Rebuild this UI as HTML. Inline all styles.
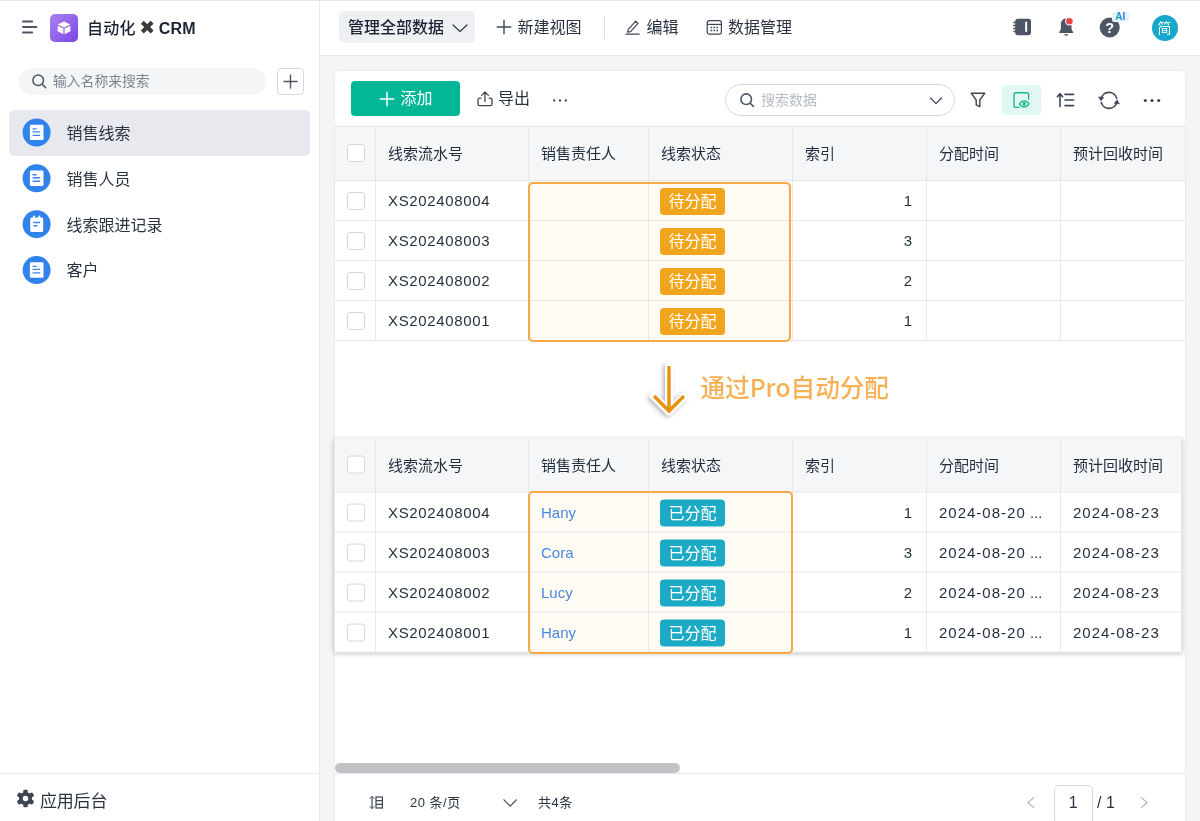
<!DOCTYPE html>
<html lang="zh-CN">
<head>
<meta charset="utf-8">
<title>自动化 CRM</title>
<style>
*{box-sizing:border-box;margin:0;padding:0}
html,body{width:1200px;height:821px;overflow:hidden}
body{font-family:"Liberation Sans","Noto Sans CJK SC",sans-serif;color:#1f2d3d;background:#f4f5f7;position:relative;font-size:14px}
.abs{position:absolute}
#topline{left:0;top:0;width:1200px;height:1px;background:#e3e5e8}
#side{left:0;top:0;width:320px;height:821px;background:#fff;border-right:1px solid #e6e8eb}
#top{left:320px;top:0;width:880px;height:56px;background:#fff;border-bottom:1px solid #e9ebee}
.t{position:absolute;white-space:nowrap;line-height:20px}
#card{left:335px;top:71px;width:850px;height:751px;background:#fff;border-radius:4px 4px 0 0;box-shadow:0 0 0 1px #eceef1}
table{border-collapse:collapse;table-layout:fixed;position:absolute;left:334px;background:#fff}
td,th{border:1px solid #e6e8eb;height:40px;font-weight:normal;text-align:left;padding:0 0 0 12px;font-size:15px;color:#1f2d3d;white-space:nowrap;overflow:hidden}
th{height:54px;padding-bottom:2px;background:#f5f6f8;color:#1f2d3d}
td.n{text-align:right;padding-right:14px}
td.id{letter-spacing:0.65px}
.dt{letter-spacing:1px}
td.hl{background:#fefaf4;border-top-color:#e9e5df;border-bottom-color:#e9e5df}
.cb{display:block;width:18px;height:18px;border:1px solid #d5d8dd;border-radius:3px;background:#fff;margin-left:0}
.tag{display:inline-block;height:27px;line-height:27px;padding:0 8.5px;border-radius:4px;color:#fff;font-size:16px;vertical-align:middle;margin-left:-1px;position:relative;top:1px}
.tag.o{background:#f0a51c}
.tag.b{background:#1daac6}
a.lk{color:#4a8ad8;text-decoration:none}
.hlbox{border:2px solid #f6a945;border-radius:5px}
</style>
</head>
<body>
<div id="wrap" style="position:absolute;left:0;top:0;width:1200px;height:821px;will-change:transform">
<div id="topline" class="abs" style="z-index:9"></div>
<div id="side" class="abs">
<svg class="abs" style="left:20px;top:17px" width="20" height="20" viewBox="0 0 20 20" fill="none" stroke="#4d5564" stroke-width="2" stroke-linecap="round"><path d="M3 4.4H12.2M3 10H16.4M3 15.6H12.2"/></svg>
<div class="abs" style="left:50px;top:14px;width:28px;height:28px;border-radius:5px;background:linear-gradient(135deg,#a985f2 0%,#7a43e6 100%)">
<svg class="abs" style="left:7px;top:6.800px" width="14" height="13.800" viewBox="0 0 14 15" preserveAspectRatio="none"><path d="M7 0.6L13.2 3.9L7 7.2L0.8 3.9Z" fill="#fff"/><path d="M0.6 5.1L6.4 8.2V14.4L0.6 11.2Z" fill="#fff"/><path d="M13.4 5.1L7.6 8.2V14.4L13.4 11.2Z" fill="#fff"/></svg></div>
<div class="t" style="left:87px;top:16.5px;font-size:16px;font-weight:500;color:#1c2433;letter-spacing:0.2px">自动化 <span style="font-family:'DejaVu Sans',sans-serif;font-size:19px;color:#3a3a3a;line-height:20px;letter-spacing:-1px;margin:0 0 0 -1px">✖</span> <b>CRM</b></div>
<div class="abs" style="left:19px;top:68px;width:247px;height:27px;border-radius:14px;background:#f4f5f7"></div>
<svg class="abs" style="left:31px;top:73px" width="16" height="16" viewBox="0 0 16 16" fill="none" stroke="#4d5564" stroke-width="1.5" stroke-linecap="round"><circle cx="7.2" cy="7.2" r="5.3"/><path d="M11.2 11.2L14.6 14.6"/></svg>
<div class="t" style="left:53px;top:72px;font-size:13.800px;color:#7d8490">输入名称来搜索</div>
<div class="abs" style="left:277px;top:68px;width:27px;height:27px;border:1px solid #d6d9de;border-radius:4px;background:#fff"></div>
<svg class="abs" style="left:282px;top:73px" width="17" height="17" viewBox="0 0 17 17" fill="none" stroke="#4d5564" stroke-width="1.4" stroke-linecap="round"><path d="M8.5 2V15M2 8.5H15"/></svg>
<div class="abs" style="left:9px;top:110px;width:301px;height:46px;border-radius:5px;background:#e8e9ee"></div>
<svg class="abs" style="left:22px;top:118px" width="30" height="30" viewBox="0 0 30 30"><g transform="translate(0.600,0.50)"><circle cx="14" cy="14" r="14" fill="#3183ec"/><rect x="7.300" y="6.200" width="13.600" height="15.400" rx="1.200" fill="#fff"/><path d="M10 10.400h4M10 13.400h7.600M10 16.900h7.600" stroke="#3a86ee" stroke-width="1.300" fill="none"/></g></svg>
<div class="t" style="left:66.500px;top:124px;font-size:16px;color:#2b3342">销售线索</div>
<svg class="abs" style="left:22px;top:164px" width="30" height="30" viewBox="0 0 30 30"><g transform="translate(0.600,0.35)"><circle cx="14" cy="14" r="14" fill="#3183ec"/><rect x="7.300" y="6.200" width="13.600" height="15.400" rx="1.200" fill="#fff"/><path d="M10 10.400h4M10 13.400h7.600M10 16.900h7.600" stroke="#3a86ee" stroke-width="1.300" fill="none"/></g></svg>
<div class="t" style="left:66.500px;top:170px;font-size:16px;color:#2b3342">销售人员</div>
<svg class="abs" style="left:22px;top:210px" width="30" height="30" viewBox="0 0 30 30"><g transform="translate(0.600,0.20)"><circle cx="14" cy="14" r="14" fill="#3183ec"/><rect x="7.600" y="7.200" width="13" height="14.600" rx="1.600" fill="#fff"/><rect x="10.600" y="5.200" width="1.700" height="3.600" rx="0.800" fill="#fff"/><rect x="15.900" y="5.200" width="1.700" height="3.600" rx="0.800" fill="#fff"/><path d="M10.800 12.300h6.600M10.800 15.600h4" stroke="#3a86ee" stroke-width="1.400" fill="none"/></g></svg>
<div class="t" style="left:66.500px;top:216px;font-size:16px;color:#2b3342">线索跟进记录</div>
<svg class="abs" style="left:22px;top:256px" width="30" height="30" viewBox="0 0 30 30"><g transform="translate(0.600,0.05)"><circle cx="14" cy="14" r="14" fill="#3183ec"/><rect x="7.300" y="6.200" width="13.600" height="15.400" rx="1.200" fill="#fff"/><path d="M10 10.400h4M10 13.400h7.600M10 16.900h7.600" stroke="#3a86ee" stroke-width="1.300" fill="none"/></g></svg>
<div class="t" style="left:66.500px;top:261px;font-size:16px;color:#2b3342">客户</div>
<div class="abs" style="left:0;top:773px;width:319px;height:1px;background:#e9ebee"></div>
<svg class="abs" style="left:16.200px;top:789.200px" width="19" height="19" viewBox="-10 -10 20 20"><g fill="#3d4554"><rect x="-2.300" y="-9.300" width="4.600" height="5" rx="0.800" transform="rotate(0)"/><rect x="-2.300" y="-9.300" width="4.600" height="5" rx="0.800" transform="rotate(60)"/><rect x="-2.300" y="-9.300" width="4.600" height="5" rx="0.800" transform="rotate(120)"/><rect x="-2.300" y="-9.300" width="4.600" height="5" rx="0.800" transform="rotate(180)"/><rect x="-2.300" y="-9.300" width="4.600" height="5" rx="0.800" transform="rotate(240)"/><rect x="-2.300" y="-9.300" width="4.600" height="5" rx="0.800" transform="rotate(300)"/><circle r="6.900"/></g><circle r="2.900" fill="#fff"/></svg>
<div class="t" style="left:40px;top:791.5px;font-size:17px;color:#2b3342;letter-spacing:-0.2px">应用后台</div>
</div>
<div id="top" class="abs">
<div class="abs" style="left:19px;top:11px;width:136px;height:32px;border-radius:5px;background:#eff0f4"></div>
<div class="t" style="left:28px;top:18px;font-size:16px;font-weight:500;color:#1c2433">管理全部数据</div>
<svg class="abs" style="left:131px;top:20px" width="18" height="16" viewBox="0 0 18 16" fill="none" stroke="#3d4554" stroke-width="1.4" stroke-linecap="round" stroke-linejoin="round"><path d="M2 5L9 11.6L16 5"/></svg>
<svg class="abs" style="left:176px;top:19px" width="16" height="16" viewBox="0 0 16 16" fill="none" stroke="#3d4554" stroke-width="1.4" stroke-linecap="round"><path d="M8 1.2V14.8M1.2 8H14.8"/></svg>
<div class="t" style="left:197.5px;top:18px;font-size:16px;color:#2b3342">新建视图</div>
<div class="abs" style="left:284px;top:16px;width:1px;height:23px;background:#dcdfe3"></div>
<svg class="abs" style="left:304px;top:18px" width="18" height="18" viewBox="0 0 18 18" fill="none" stroke="#3d4554" stroke-width="1.2" stroke-linecap="round" stroke-linejoin="round"><path d="M4.2 11.6L11.6 3.2L14 5.4L6.6 13.6L3.6 14.2Z"/><path d="M2 16.2H15.2"/></svg>
<div class="t" style="left:326.5px;top:18px;font-size:16px;color:#2b3342">编辑</div>
<svg class="abs" style="left:386px;top:19px" width="17" height="17" viewBox="0 0 17 17" fill="none" stroke="#3d4554" stroke-width="1.2"><rect x="1.2" y="1.6" width="14.2" height="13.6" rx="2.2"/><path d="M1.2 5.4H15.4"/><path d="M4.6 8.4h1.6M7.5 8.4h1.6M10.4 8.4h1.6M4.6 11.4h1.6M7.5 11.4h1.6M10.4 11.4h1.6" stroke-width="1.5"/></svg>
<div class="t" style="left:408px;top:18px;font-size:16px;color:#2b3342">数据管理</div>
<!-- right icons -->
<svg class="abs" style="left:692px;top:17px" width="20" height="20" viewBox="0 0 20 20"><rect x="3.2" y="1.8" width="15.8" height="16.4" rx="2.6" fill="#4e5665"/><rect x="13.2" y="4.8" width="1.9" height="10" fill="#fff"/><path d="M1.8 5.4h2.4M1.8 8.4h2.4M1.8 11.4h2.4M1.8 14.4h2.4" stroke="#4e5665" stroke-width="1.5" stroke-linecap="round"/></svg>
<svg class="abs" style="left:737px;top:16px" width="20" height="22" viewBox="0 0 20 22"><path d="M9.2 2.4c-3.4 0-5.3 2.6-5.3 5.6v4.6c0 1.2-.6 2.2-1.6 3.2-.5.5-.2 1.2.5 1.2h12.8c.7 0 1-.7.5-1.2-1-1-1.6-2-1.6-3.2V8c0-3-1.9-5.600-5.300-5.600z" fill="#4e5665"/><path d="M7 18.200a2.300 2.300 0 0 0 4.400 0z" fill="#4e5665"/><circle cx="12.400" cy="5.200" r="4.300" fill="#fff"/><circle cx="12.400" cy="5.200" r="3.300" fill="#ee4545"/></svg>
<svg class="abs" style="left:779px;top:17px" width="22" height="22" viewBox="0 0 22 22"><circle cx="10.700" cy="10.500" r="10" fill="#4e5665"/><text x="10.700" y="15.600" font-family="Liberation Sans,sans-serif" font-weight="bold" font-size="14.500" fill="#fff" text-anchor="middle">?</text></svg>
<div class="abs" style="left:792px;top:11.500px;width:16.500px;height:10px;border-radius:2px;background:#e3f4fb"></div>
<svg class="abs" style="left:792px;top:11px" width="17" height="11" viewBox="0 0 17 11"><defs><linearGradient id="aig" x1="0" y1="0" x2="1" y2="0"><stop offset="0" stop-color="#27b98c"/><stop offset="0.600" stop-color="#2b7de9"/><stop offset="1" stop-color="#4a6cf0"/></linearGradient></defs><text x="8.300" y="9.200" font-family="Liberation Sans,sans-serif" font-weight="bold" font-size="10" fill="url(#aig)" text-anchor="middle">AI</text></svg>
<div class="abs" style="left:831.500px;top:14.500px;width:26px;height:26px;border-radius:13px;background:#17a7ca"></div>
<div class="t" style="left:837.500px;top:18px;font-size:14px;color:#fff">简</div>
</div>
<div id="card" class="abs"></div>
<!-- toolbar -->
<div class="abs" style="left:351px;top:81px;width:109px;height:35px;border-radius:4px;background:#03b796"></div>
<svg class="abs" style="left:379px;top:91px" width="16" height="16" viewBox="0 0 16 16" fill="none" stroke="#fff" stroke-width="1.500" stroke-linecap="round"><path d="M8 1.200V14.800M1.200 8H14.800"/></svg>
<div class="t" style="left:400.500px;top:89px;font-size:16px;color:#fff">添加</div>
<svg class="abs" style="left:476px;top:90px" width="18" height="18" viewBox="0 0 18 18" fill="none" stroke="#3d4554" stroke-width="1.300" stroke-linecap="round" stroke-linejoin="round"><path d="M9 11.500V2.200M5.600 5.400L9 2L12.400 5.400"/><path d="M4.800 8.200H3.600C2.700 8.200 2 8.900 2 9.800V14C2 14.900 2.700 15.600 3.600 15.600H14.400C15.300 15.600 16 14.900 16 14V9.800C16 8.900 15.300 8.200 14.400 8.200H13.200"/></svg>
<div class="t" style="left:498px;top:89px;font-size:16px;color:#2b3342">导出</div>
<svg class="abs" style="left:552px;top:98px" width="16" height="5" viewBox="0 0 16 5" fill="#3d4554"><circle cx="2.200" cy="2.500" r="1.150"/><circle cx="8" cy="2.500" r="1.150"/><circle cx="13.800" cy="2.500" r="1.150"/></svg>
<div class="abs" style="left:725px;top:83.500px;width:229.500px;height:32px;border:1px solid #d6d9de;border-radius:16px;background:#fff"></div>
<svg class="abs" style="left:739px;top:91.500px" width="16" height="16" viewBox="0 0 16 16" fill="none" stroke="#4d5564" stroke-width="1.600" stroke-linecap="round"><circle cx="7.200" cy="7.200" r="5.300"/><path d="M11.200 11.200L14.400 14.400"/></svg>
<div class="t" style="left:761px;top:90px;font-size:14px;color:#b7bbc2">搜索数据</div>
<svg class="abs" style="left:929px;top:96px" width="14" height="10" viewBox="0 0 14 10" fill="none" stroke="#3d4554" stroke-width="1.300" stroke-linecap="round" stroke-linejoin="round"><path d="M1.500 2L7 7.600L12.500 2"/></svg>
<svg class="abs" style="left:969px;top:91px" width="18" height="18" viewBox="0 0 18 18" fill="none" stroke="#3d4554" stroke-width="1.400" stroke-linejoin="round"><path d="M2.200 2.200H15.800L10.800 9V15.600L7.200 13.800V9Z"/></svg>
<div class="abs" style="left:1002px;top:85px;width:39px;height:30px;border-radius:4px;background:#e3f7f2"></div>
<svg class="abs" style="left:1012px;top:91px" width="19" height="18" viewBox="0 0 19 18" fill="none" stroke="#1db893" stroke-width="1.400" stroke-linecap="round" stroke-linejoin="round"><path d="M16.600 8V3.800C16.600 2.700 15.700 1.800 14.600 1.800H4C2.900 1.800 2 2.700 2 3.800V14.400C2 15.500 2.900 16.400 4 16.400H7"/><path d="M7.400 12.900C8.600 10.900 10.200 9.900 12.200 9.900S15.800 10.900 17 12.900C15.800 14.900 14.200 15.900 12.200 15.900S8.600 14.900 7.400 12.900Z"/><circle cx="12.200" cy="12.900" r="1.100" fill="#1db893"/></svg>
<svg class="abs" style="left:1056px;top:92px" width="19" height="16" viewBox="0 0 19 16" fill="none" stroke="#3d4554" stroke-width="1.600" stroke-linecap="round" stroke-linejoin="round"><path d="M4 14.600V1.800M1.400 4.600L4 1.800L6.600 4.600"/><path d="M9 2.400H17.600M9 8H17.600M9 13.600H17.600"/></svg>
<svg class="abs" style="left:1098px;top:90px" width="22" height="20" viewBox="0 0 22 20" fill="none" stroke="#3d4554" stroke-width="1.600" stroke-linecap="round" stroke-linejoin="round"><path d="M18.730 8.330A8 8 0 0 0 3.120 9.010"/><path d="M3.270 12.470A8 8 0 0 0 18.880 11.790"/><path d="M0.900 6.900L5.700 7.500L3 10.700Z" fill="#3d4554" stroke-width="0.600"/><path d="M21.100 13.900L16.300 13.300L19 10.100Z" fill="#3d4554" stroke-width="0.600"/></svg>
<svg class="abs" style="left:1143px;top:97.500px" width="18" height="5" viewBox="0 0 18 5" fill="#3d4554"><circle cx="2.300" cy="2.500" r="1.600"/><circle cx="9" cy="2.500" r="1.600"/><circle cx="15.700" cy="2.500" r="1.600"/></svg>
<table style="top:126px;width:851px;"><colgroup><col style="width:41px"><col style="width:153px"><col style="width:120px"><col style="width:144px"><col style="width:134px"><col style="width:134px"><col style="width:125px"></colgroup>
<tr><th><i class="cb"></i></th><th>线索流水号</th><th>销售责任人</th><th>线索状态</th><th>索引</th><th>分配时间</th><th>预计回收时间</th></tr>
<tr><td><i class="cb"></i></td><td class="id">XS202408004</td><td class="hl"></td><td class="hl"><span class="tag o">待分配</span></td><td class="n">1</td><td></td><td></td></tr>
<tr><td><i class="cb"></i></td><td class="id">XS202408003</td><td class="hl"></td><td class="hl"><span class="tag o">待分配</span></td><td class="n">3</td><td></td><td></td></tr>
<tr><td><i class="cb"></i></td><td class="id">XS202408002</td><td class="hl"></td><td class="hl"><span class="tag o">待分配</span></td><td class="n">2</td><td></td><td></td></tr>
<tr><td><i class="cb"></i></td><td class="id">XS202408001</td><td class="hl"></td><td class="hl"><span class="tag o">待分配</span></td><td class="n">1</td><td></td><td></td></tr>
</table>
<div class="abs hlbox" style="left:527.500px;top:181.500px;width:263.500px;height:160px"></div>
<svg class="abs" style="left:640px;top:356px" width="60" height="68" viewBox="0 0 60 68"><defs><filter id="sh" x="-50%" y="-50%" width="200%" height="200%"><feGaussianBlur stdDeviation="2.5"/></filter></defs><g fill="none" stroke-linecap="round" stroke-linejoin="round"><path d="M29 10V55M14 40L29 55L44 40" stroke="#000" stroke-opacity="0.33" stroke-width="7" filter="url(#sh)" transform="translate(-2,2)"/><path d="M29 9.5V55.5M13.500 40L29 55.500L44.500 40" stroke="#fff" stroke-width="8"/><path d="M29 10V55M14 40L29 55L44 40" stroke="#e8920c" stroke-width="3.400" stroke-linecap="butt" stroke-linejoin="miter"/></g></svg>
<div class="t" style="left:700.500px;top:369.500px;font-size:24.600px;line-height:32px;color:#f7b155;font-weight:500;font-family:'Noto Sans CJK SC',sans-serif">通过Pro自动分配</div>
<table style="top:437px;width:847px;transform:translateY(0.5px);box-shadow:0 1px 5px rgba(0,0,0,0.28);"><colgroup><col style="width:41px"><col style="width:153px"><col style="width:120px"><col style="width:144px"><col style="width:134px"><col style="width:134px"><col style="width:121px"></colgroup>
<tr><th><i class="cb"></i></th><th>线索流水号</th><th>销售责任人</th><th>线索状态</th><th>索引</th><th>分配时间</th><th>预计回收时间</th></tr>
<tr><td><i class="cb"></i></td><td class="id">XS202408004</td><td class="hl"><a class="lk">Hany</a></td><td class="hl"><span class="tag b">已分配</span></td><td class="n">1</td><td><span class="dt">2024-08-20</span> ...</td><td class="dt">2024-08-23</td></tr>
<tr><td><i class="cb"></i></td><td class="id">XS202408003</td><td class="hl"><a class="lk">Cora</a></td><td class="hl"><span class="tag b">已分配</span></td><td class="n">3</td><td><span class="dt">2024-08-20</span> ...</td><td class="dt">2024-08-23</td></tr>
<tr><td><i class="cb"></i></td><td class="id">XS202408002</td><td class="hl"><a class="lk">Lucy</a></td><td class="hl"><span class="tag b">已分配</span></td><td class="n">2</td><td><span class="dt">2024-08-20</span> ...</td><td class="dt">2024-08-23</td></tr>
<tr><td><i class="cb"></i></td><td class="id">XS202408001</td><td class="hl"><a class="lk">Hany</a></td><td class="hl"><span class="tag b">已分配</span></td><td class="n">1</td><td><span class="dt">2024-08-20</span> ...</td><td class="dt">2024-08-23</td></tr>
</table>
<div class="abs hlbox" style="left:528px;top:491px;width:264.500px;height:162.500px"></div>
<div class="abs" style="left:335px;top:763px;width:345px;height:10px;border-radius:5px;background:#c1c2c6"></div>
<div class="abs" style="left:335px;top:773px;width:850px;height:1px;background:#e6e8eb"></div>
<svg class="abs" style="left:369px;top:795px" width="15" height="15" viewBox="0 0 15 15" fill="none" stroke="#3d4554" stroke-width="1.200"><path d="M3 1.600V13.400" /><path d="M0.800 3.600L3 1.400L5.200 3.600M0.800 11.400L3 13.600L5.200 11.400" stroke-width="1"/><rect x="7" y="2" width="6.400" height="11"/><path d="M7 5.700H13.400M7 9.300H13.400"/></svg>
<div class="t" style="left:410px;top:792.500px;font-size:13px;letter-spacing:0.500px;color:#2b3342">20 条/页</div>
<svg class="abs" style="left:503px;top:798px" width="15" height="10" viewBox="0 0 15 10" fill="none" stroke="#3d4554" stroke-width="1.200" stroke-linecap="round" stroke-linejoin="round"><path d="M1 1.800L7.200 8.200L13.400 1.800"/></svg>
<div class="t" style="left:538px;top:792.500px;font-size:13px;letter-spacing:0.500px;color:#2b3342">共4条</div>
<svg class="abs" style="left:1025px;top:795px" width="12" height="15" viewBox="0 0 12 15" fill="none" stroke="#a9aeb6" stroke-width="1.200" stroke-linecap="round" stroke-linejoin="round"><path d="M8.800 2.600L3 7.600L8.800 12.600"/></svg>
<div class="abs" style="left:1054px;top:784.500px;width:38.500px;height:40px;border:1px solid #d6d9de;border-radius:5px;background:#fff"></div>
<div class="t" style="left:1054px;top:793px;width:38.500px;text-align:center;font-size:16px;color:#2b3342">1</div>
<div class="t" style="left:1097px;top:793px;font-size:16px;color:#2b3342">/ 1</div>
<svg class="abs" style="left:1138px;top:795px" width="12" height="15" viewBox="0 0 12 15" fill="none" stroke="#a9aeb6" stroke-width="1.200" stroke-linecap="round" stroke-linejoin="round"><path d="M3.400 2.600L9.200 7.600L3.400 12.600"/></svg>
</div>
</body>
</html>
